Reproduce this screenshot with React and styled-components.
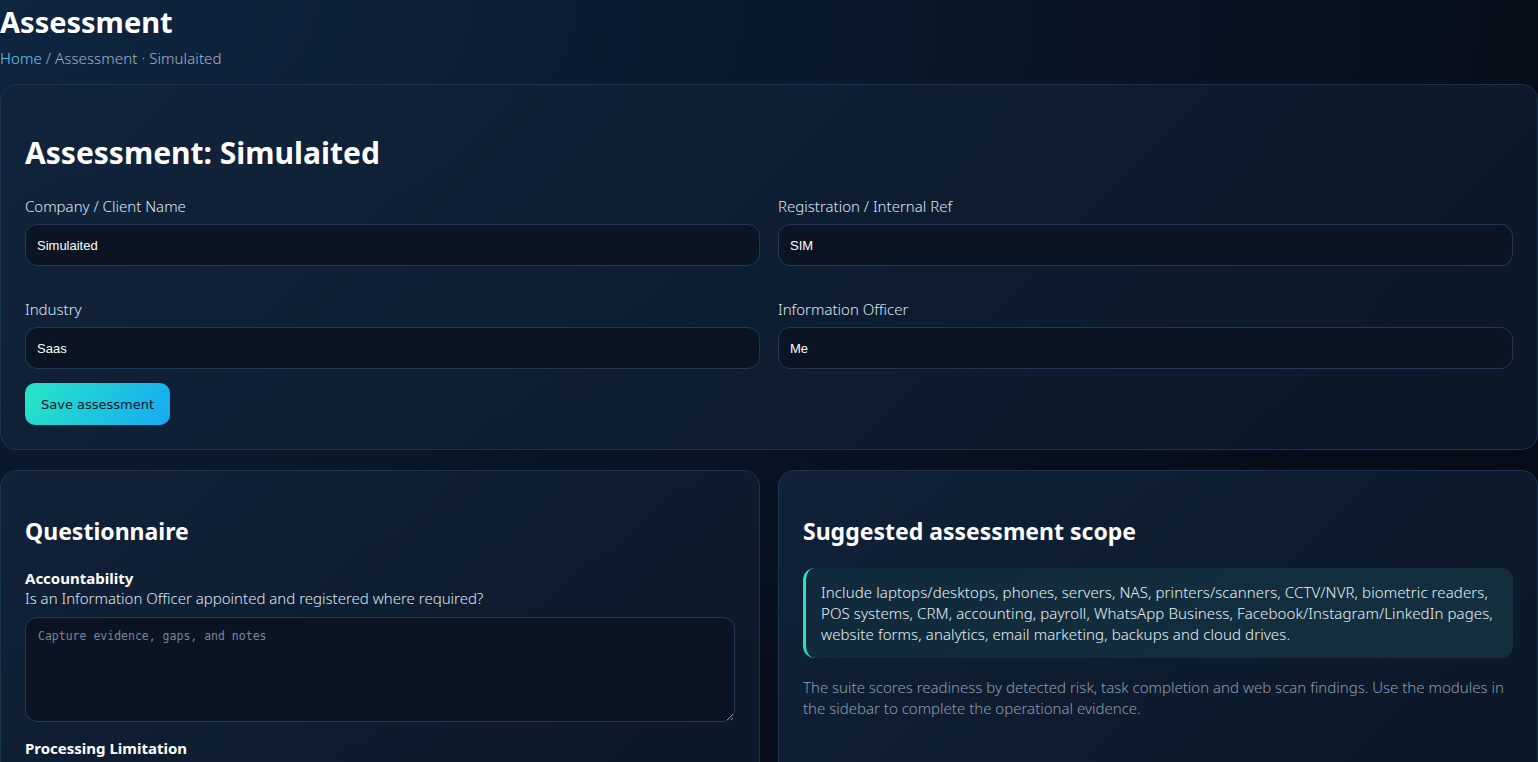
import React from "react";
import styled, { createGlobalStyle } from "styled-components";

const GlobalStyle = createGlobalStyle`
  html, body {
    margin: 0;
    padding: 0;
    min-height: 100%;
  }
  body {
    background: radial-gradient(ellipse at 0% 0%, #0f2540 0%, #0a1a2e 35%, #060e1a 70%, #040a12 100%);
    background-color: #050c16;
    color: #e6eef6;
    font-family: "Noto Sans", "Open Sans", sans-serif;
    min-height: 762px;
    overflow: hidden;
  }
`;

const Page = styled.div`
  display: flex;
  flex-direction: column;
`;

const PageHeader = styled.header`
  display: flex;
  flex-direction: column;
  gap: 4px;
  margin-bottom: 16px;
`;

const PageTitle = styled.h1`
  margin: 0;
  font-size: 29px;
  font-weight: 700;
  line-height: 44px;
  color: #ffffff;
`;

const Breadcrumb = styled.div`
  font-size: 15px;
  font-weight: 300;
  color: #a3b4c6;
  line-height: 20px;
  letter-spacing: 0.1px;

  a {
    color: #66d0f7;
    text-decoration: none;
  }
`;

const Card = styled.section`
  background: linear-gradient(135deg, rgba(18, 36, 60, 0.85) 0%, rgba(11, 25, 41, 0.9) 100%);
  border: 1px solid #1d3350;
  border-radius: 16px;
  padding: 24px;
  box-sizing: border-box;
  min-width: 0;
`;

const CardTitle = styled.h2`
  margin: ${(p) => (p.$large ? "24px 0 24px" : "22px 0 21px")};
  font-size: ${(p) => (p.$large ? "30px" : "23px")};
  font-weight: 700;
  color: #ffffff;
  line-height: 1.3;
`;

const FormGrid = styled.div`
  display: grid;
  grid-template-columns: 1fr 1fr;
  column-gap: 18px;
  row-gap: 33px;
`;

const Field = styled.label`
  display: flex;
  flex-direction: column;
  gap: 8px;
  font-size: 15px;
  font-weight: 300;
  color: #dde7f1;
`;

const Input = styled.input`
  height: 42px;
  box-sizing: border-box;
  background: #0a1423;
  border: 1px solid #223a58;
  border-radius: 12px;
  padding: 0 11px;
  color: #ffffff;
  font-family: "Liberation Sans", Arial, sans-serif;
  font-size: 13px;
  outline: none;
`;

const PrimaryButton = styled.button`
  align-self: flex-start;
  margin-top: 14px;
  height: 42px;
  padding: 0 16px;
  border: none;
  border-radius: 10px;
  background: linear-gradient(120deg, #27e6c6 0%, #16a9f5 100%);
  color: #04121e;
  font-family: "DejaVu Sans", sans-serif;
  font-size: 13px;
  font-weight: 500;
  cursor: pointer;
`;

const Columns = styled.div`
  display: grid;
  grid-template-columns: 760px 1fr;
  gap: 18px;
  margin-top: 20px;
`;

const Question = styled.div`
  display: flex;
  flex-direction: column;
  margin-bottom: 16px;
`;

const QuestionTitle = styled.div`
  font-size: 15px;
  font-weight: 700;
  color: #ffffff;
  line-height: 20px;
`;

const QuestionText = styled.div`
  font-size: 15px;
  font-weight: 300;
  color: #dde7f1;
  line-height: 21px;
  margin-bottom: 8px;
`;

const TextArea = styled.textarea`
  height: 105px;
  box-sizing: border-box;
  background: #0a1423;
  border: 1px solid #223a58;
  border-radius: 12px;
  padding: 11px 12px;
  color: #ffffff;
  font-family: "DejaVu Sans Mono", monospace;
  font-size: 11.5px;
  resize: vertical;
  outline: none;

  &::placeholder {
    color: #7b8794;
  }
`;

const Callout = styled.div`
  background: linear-gradient(135deg, #112a3b 0%, #14303f 100%);
  border-left: 3px solid #2ae0bd;
  border-radius: 12px;
  padding: 14px 16px 13px 15px;
  font-size: 15px;
  font-weight: 300;
  line-height: 21px;
  letter-spacing: 0.1px;
  color: #e8f0f6;
`;

const Muted = styled.p`
  margin: 19px 0 0;
  font-size: 15px;
  font-weight: 300;
  line-height: 21px;
  color: #8e9dae;
`;

const questions = [
  {
    title: "Accountability",
    text: "Is an Information Officer appointed and registered where required?",
  },
  { title: "Processing Limitation", text: "" },
];

export default function App() {
  return (
    <>
      <GlobalStyle />
      <Page>
        <PageHeader>
          <PageTitle>Assessment</PageTitle>
          <Breadcrumb>
            <a href="#home">Home</a> / Assessment · Simulaited
          </Breadcrumb>
        </PageHeader>

        <Card>
          <CardTitle $large>Assessment: Simulaited</CardTitle>
          <FormGrid>
            <Field>
              Company / Client Name
              <Input defaultValue="Simulaited" />
            </Field>
            <Field>
              Registration / Internal Ref
              <Input defaultValue="SIM" />
            </Field>
            <Field>
              Industry
              <Input defaultValue="Saas" />
            </Field>
            <Field>
              Information Officer
              <Input defaultValue="Me" />
            </Field>
          </FormGrid>
          <PrimaryButton>Save assessment</PrimaryButton>
        </Card>

        <Columns>
          <Card>
            <CardTitle>Questionnaire</CardTitle>
            {questions.map((q) => (
              <Question key={q.title}>
                <QuestionTitle>{q.title}</QuestionTitle>
                {q.text && <QuestionText>{q.text}</QuestionText>}
                {q.text && <TextArea placeholder="Capture evidence, gaps, and notes" />}
              </Question>
            ))}
          </Card>
          <Card>
            <CardTitle>Suggested assessment scope</CardTitle>
            <Callout>
              Include laptops/desktops, phones, servers, NAS, printers/scanners, CCTV/NVR,
              biometric readers, POS systems, CRM, accounting, payroll, WhatsApp Business,
              Facebook/Instagram/LinkedIn pages, website forms, analytics, email marketing,
              backups and cloud drives.
            </Callout>
            <Muted>
              The suite scores readiness by detected risk, task completion and web scan findings.
              Use the modules in the sidebar to complete the operational evidence.
            </Muted>
          </Card>
        </Columns>
      </Page>
    </>
  );
}
